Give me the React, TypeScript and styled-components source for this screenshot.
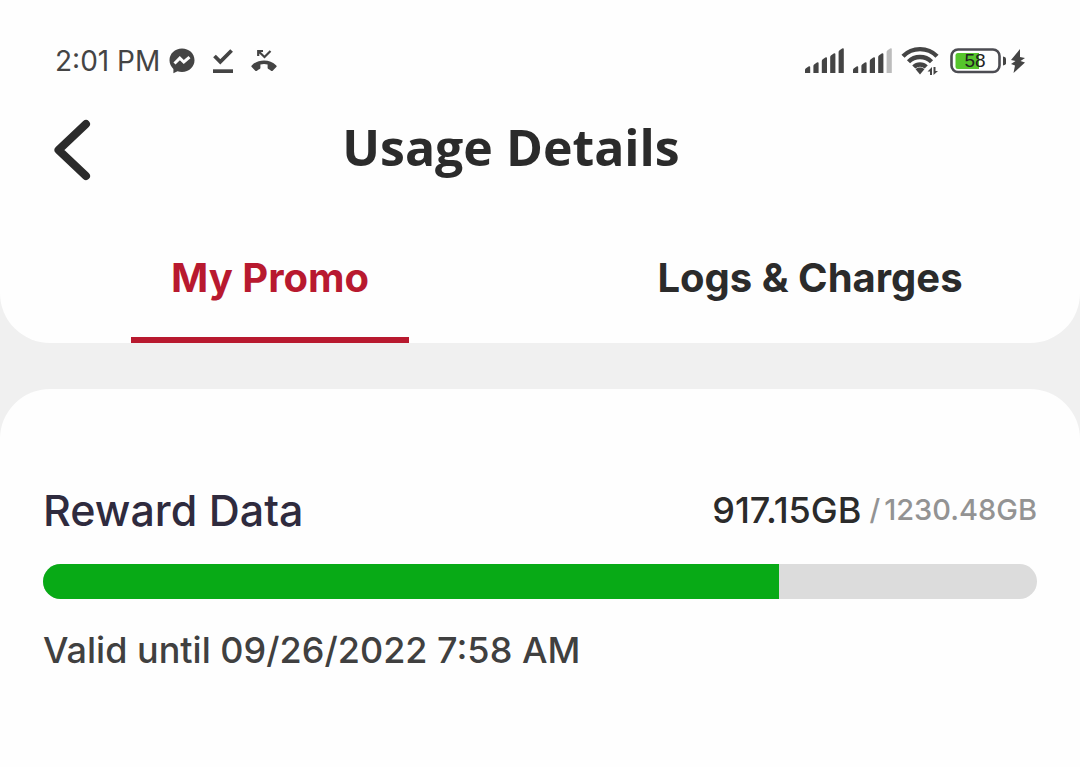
import React, { useState } from "react";
import styled, { createGlobalStyle } from "styled-components";

const GlobalStyle = createGlobalStyle`
  *, *::before, *::after { box-sizing: border-box; }
  body {
    margin: 0;
    background: #f0f0f0;
    color: #2b2b2b;
    font-family: Inter, "Open Sans", sans-serif;
  }
  #root { min-height: 100vh; display: flex; flex-direction: column; }
`;

const TopPanel = styled.header`
  background: #fefefe;
  border-radius: 0 0 50px 50px;
`;

const StatusBar = styled.div`
  display: flex;
  align-items: center;
  justify-content: space-between;
  padding: 41px 55px 0;
`;

const StatusGroup = styled.div<{ $gap: number }>`
  display: flex;
  align-items: center;
  gap: ${(p) => p.$gap}px;
  height: 40px;

  svg { display: block; flex: none; }
`;

const Clock = styled.time`
  font-size: 28px;
  line-height: 40px;
  color: #444;
`;

const TitleBar = styled.div`
  display: grid;
  grid-template-columns: 60px 1fr 60px;
  align-items: center;
  height: 100px;
  margin: 18px 58px 0 50px;
`;

const BackButton = styled.button`
  display: flex;
  padding: 0;
  border: 0;
  background: none;
  cursor: pointer;
`;

const Title = styled.h1`
  margin: 0;
  padding: 0 50px 4px 0;
  justify-self: center;
  font-family: "Open Sans", sans-serif;
  font-size: 50px;
  line-height: 64px;
  font-weight: 700;
  white-space: nowrap;
`;

const TabList = styled.div`
  display: grid;
  grid-template-columns: 1fr 1fr;
  justify-items: center;
  margin-top: 44px;
`;

const Tab = styled.button<{ $active: boolean }>`
  min-width: 278px;
  height: 100px;
  padding: 0 0 24px;
  border: 0;
  border-bottom: 6px solid ${(p) => (p.$active ? "#b8192f" : "transparent")};
  background: none;
  color: ${(p) => (p.$active ? "#b8192f" : "#2b2b2b")};
  font-family: inherit;
  font-size: 40px;
  line-height: 48px;
  font-weight: 700;
  white-space: nowrap;
  cursor: pointer;
`;

const Card = styled.main`
  flex: 1;
  margin-top: 46px;
  padding: 97px 43px 40px;
  border-radius: 50px 50px 0 0;
  background: #fefefe;
`;

const UsageRow = styled.div`
  display: flex;
  align-items: center;
  justify-content: space-between;
`;

const UsageName = styled.h2`
  margin: 0;
  font-size: 43px;
  line-height: 48px;
  font-weight: 500;
  color: #2f2b3e;
`;

const Amount = styled.p`
  display: flex;
  align-items: center;
  gap: 8px;
  margin: 0;
  font-size: 36px;
  line-height: 48px;
  font-weight: 500;
`;

const Total = styled.span`
  display: flex;
  gap: 4px;
  font-size: 29px;
  color: #939393;
`;

const Track = styled.div`
  height: 35px;
  margin-top: 30px;
  border-radius: 18px;
  background: #dcdcdc;
  overflow: hidden;
`;

const Fill = styled.div`
  height: 100%;
  background: #08aa16;
`;

const Validity = styled.p`
  margin: 31px 0 0;
  font-size: 36px;
  line-height: 40px;
  font-weight: 500;
  color: #404040;
`;

const INK = "#444444";

const MessengerIcon = () => (
  <svg width="26" height="26" viewBox="0 0 26 26" aria-hidden="true">
    <path fill={INK} d="M13 .5C5.900.5.5 5.600.5 12.300c0 3.500 1.500 6.500 3.900 8.600v4.300l4.100-2c1.400.5 2.900.7 4.500.7 7.100 0 12.500-5.100 12.500-11.700S20.100.5 13 .5z" />
    <path fill="none" stroke="#fefefe" strokeWidth="3" d="M5.500 15.500l5.300-5.300 4 3.800 5.700-4.800" />
  </svg>
);

const DownloadDoneIcon = () => (
  <svg width="22" height="26" viewBox="0 0 22 26" aria-hidden="true">
    <path fill="none" stroke={INK} strokeWidth="3.800" d="M2.500 8l5.800 5.800L19.600 2.500" />
    <path fill={INK} d="M1 21.300h20V25H1z" />
  </svg>
);

const MissedCallIcon = () => (
  <svg width="26" height="26" viewBox="0 0 26 26" aria-hidden="true">
    <path fill="none" stroke={INK} strokeWidth="2.200" d="M7.200 8V3H12M7.500 3.300l6 5.700 6-6" />
    <path fill={INK} d="M13 12.500c-4.700 0-9 1.700-12.300 4.900-.5.500-.5 1.200 0 1.700l3.600 3.600c.5.500 1.200.5 1.700 0 .8-.7 1.700-1.300 2.700-1.800.5-.2.700-.6.700-1.100v-3.200c2.400-.7 4.800-.7 7.200 0v3.200c0 .5.300.9.700 1.100 1 .5 1.900 1.100 2.700 1.800.5.500 1.200.5 1.700 0l3.600-3.600c.5-.5.5-1.200 0-1.700-3.300-3.200-7.600-4.900-12.300-4.900z" />
  </svg>
);

const BAR_TOPS = [18, 14, 9, 5, 0];

const SignalIcon = ({ level }: { level: number }) => (
  <svg width="39" height="26" viewBox="0 0 39 26" role="img" aria-label={`Signal ${level} of 5`}>
    {BAR_TOPS.map((top, i) => (
      <path
        key={top}
        fill={i < level ? INK : "#bcbcbc"}
        d={`M${i * 8.4} 25V${top + 4}q0-1 1-1.700l2.500-1.800q1.700-.8 1.700.8V25z`}
      />
    ))}
  </svg>
);

const WifiIcon = () => (
  <svg width="40" height="30" viewBox="0 0 40 30" role="img" aria-label="Wi-Fi">
    <g fill="none" stroke={INK} strokeWidth="4.400">
      <path d="M2 10.200a24 24 0 0 1 34 0" />
      <path d="M7.500 15.800a16.200 16.200 0 0 1 23 0" />
      <path d="M12.800 21a8.800 8.800 0 0 1 12.400 0" />
    </g>
    <path fill={INK} d="M19 21.500c1.900 0 3.400.6 4.400 1.800L19 28.500l-4.400-5.200c1-1.200 2.500-1.800 4.400-1.800z" />
    <path fill="#fefefe" d="M25.800 20.500H38V30H25.800z" />
    <path fill={INK} d="M31 21v8h-2v-3.500h-2.500zM32.500 29v-8h2v4H37z" />
  </svg>
);

const BatteryIcon = () => (
  <svg width="56" height="26" viewBox="0 0 56 26" role="img" aria-label="Battery 58 percent">
    <rect x="1.500" y="1.500" width="48" height="22.500" rx="6.500" fill="none" stroke="#4c4c52" strokeWidth="2.600" />
    <path fill="#56c52c" d="M8 5h21v16H8q-2.500 0-2.500-2.500v-11Q5.500 5 8 5z" />
    <path fill={INK} d="M53 8.500q3 .3 3 2v5q0 1.700-3 2z" />
    <text x="25" y="19" textAnchor="middle" fontFamily="Liberation Sans, sans-serif" fontSize="19" fill="#222">58</text>
  </svg>
);

const BoltIcon = () => (
  <svg width="15" height="26" viewBox="0 0 15 26" aria-hidden="true">
    <path fill={INK} d="M10 1L1 12l4.500 1L1 16l4 1.500L3.500 25 15 14.500l-4.500-1.500L15 10l-5-1z" />
  </svg>
);

const BackIcon = () => (
  <svg width="44" height="64" viewBox="0 0 44 64" aria-hidden="true">
    <path fill="none" stroke="#2b2b2b" strokeWidth="8" strokeLinecap="round" strokeLinejoin="round" d="M36 7L8.500 33 36 59" />
  </svg>
);

const TABS = ["My Promo", "Logs & Charges"];

export default function App() {
  const [active, setActive] = useState(0);

  return (
    <>
      <GlobalStyle />
      <TopPanel>
        <StatusBar>
          <StatusGroup $gap={9}>
            <Clock>2:01 PM</Clock>
            <StatusGroup $gap={17}>
              <MessengerIcon />
              <DownloadDoneIcon />
              <MissedCallIcon />
            </StatusGroup>
          </StatusGroup>
          <StatusGroup $gap={9}>
            <SignalIcon level={5} />
            <SignalIcon level={4} />
            <WifiIcon />
            <StatusGroup $gap={4}>
              <BatteryIcon />
              <BoltIcon />
            </StatusGroup>
          </StatusGroup>
        </StatusBar>
        <TitleBar>
          <BackButton type="button" aria-label="Back">
            <BackIcon />
          </BackButton>
          <Title>Usage Details</Title>
        </TitleBar>
        <TabList role="tablist">
          {TABS.map((label, i) => (
            <Tab
              key={label}
              type="button"
              role="tab"
              aria-selected={i === active}
              $active={i === active}
              onClick={() => setActive(i)}
            >
              {label}
            </Tab>
          ))}
        </TabList>
      </TopPanel>
      <Card>
        <UsageRow>
          <UsageName id="usage-name">Reward Data</UsageName>
          <Amount>
            917.15GB
            <Total>
              <span>/</span>
              <span>1230.48GB</span>
            </Total>
          </Amount>
        </UsageRow>
        <Track role="progressbar" aria-labelledby="usage-name" aria-valuenow={74} aria-valuemin={0} aria-valuemax={100}>
          <Fill style={{ width: "74%" }} />
        </Track>
        <Validity>Valid until 09/26/2022 7:58 AM</Validity>
      </Card>
    </>
  );
}
